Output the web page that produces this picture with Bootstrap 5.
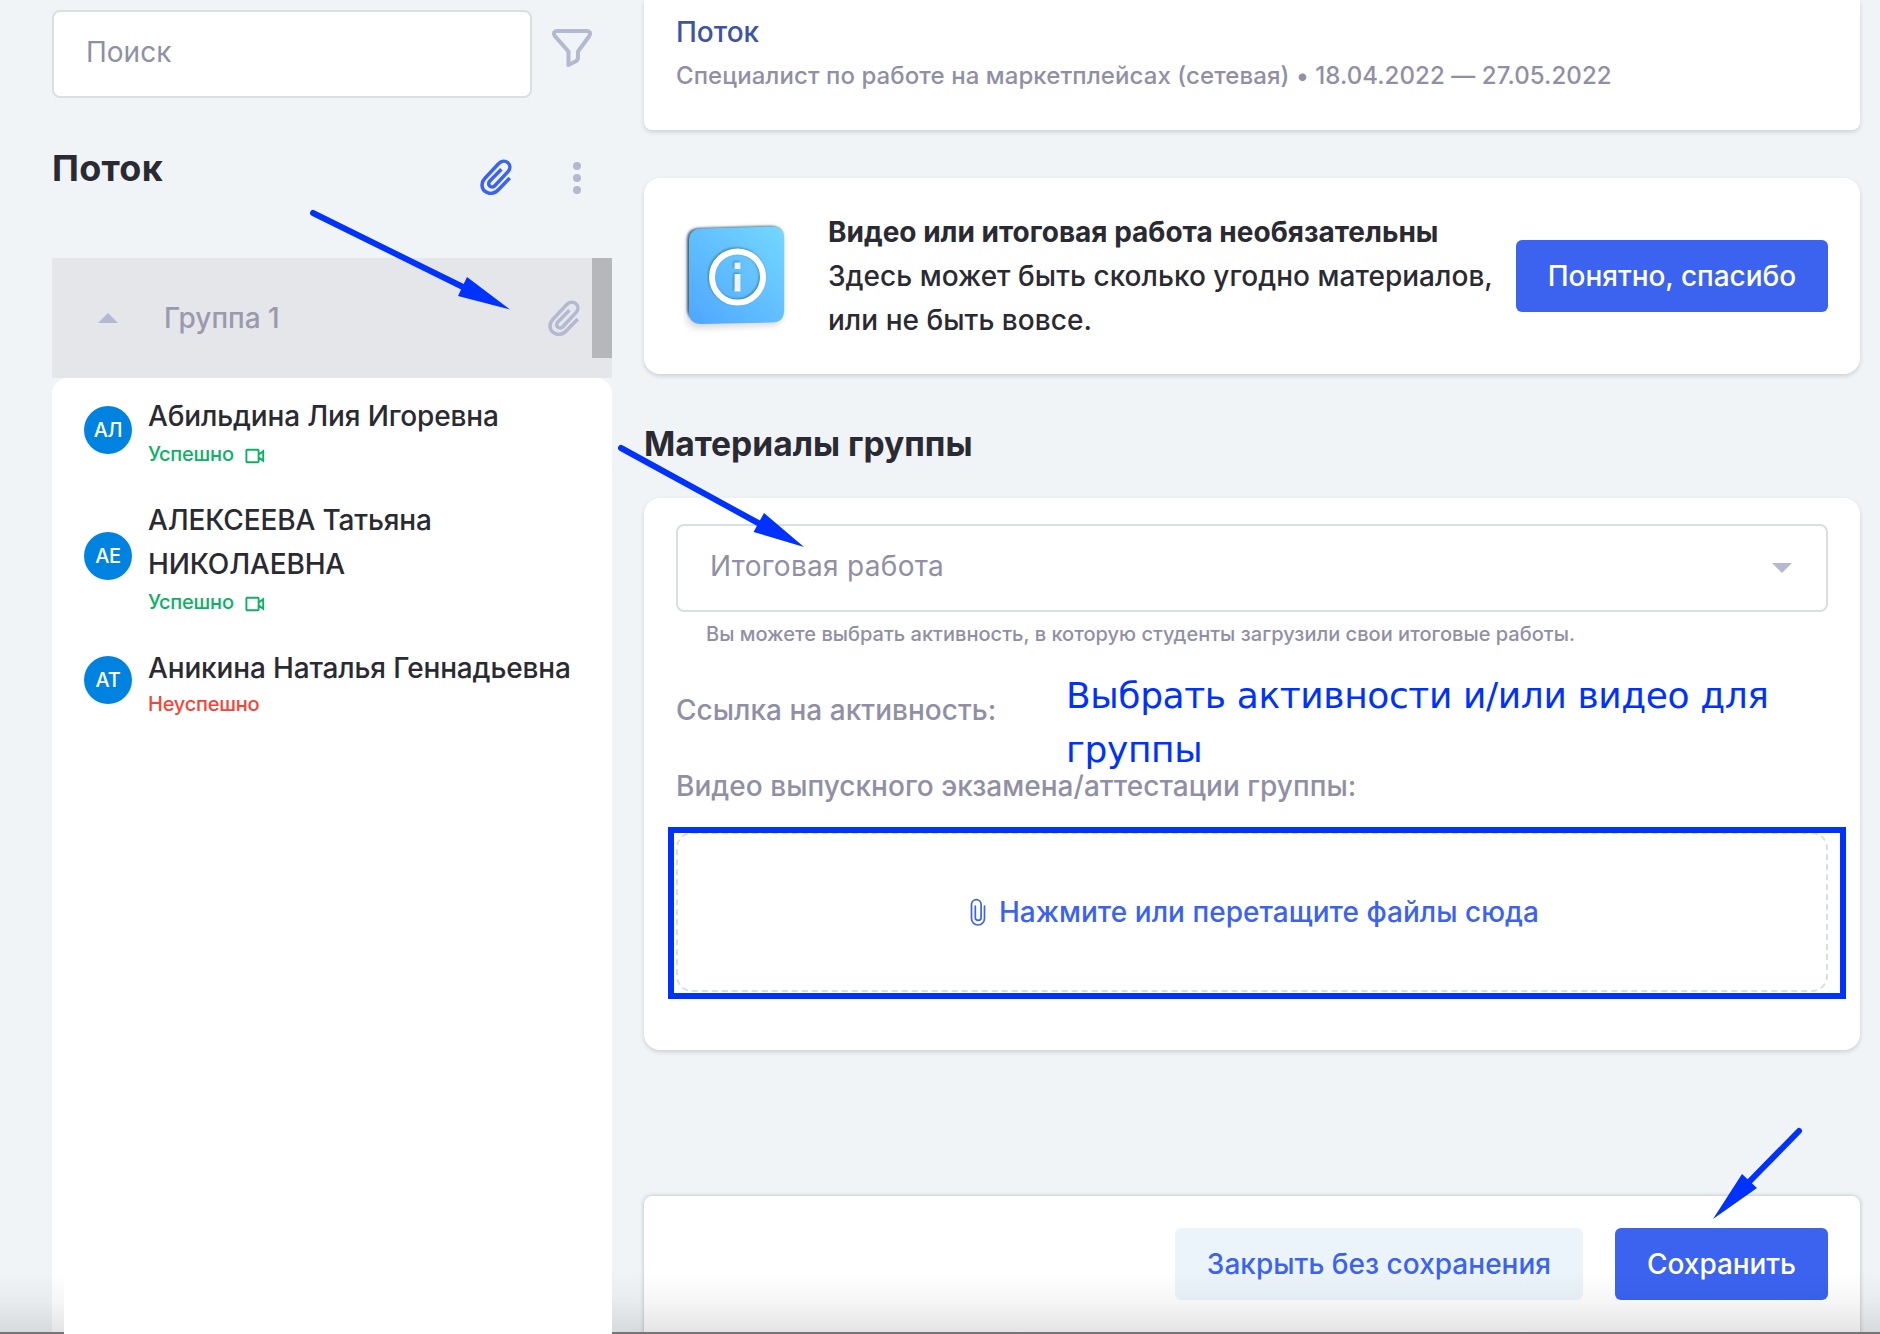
<!DOCTYPE html>
<html lang="ru">
<head>
<meta charset="utf-8">
<meta name="viewport" content="width=device-width, initial-scale=1">
<title>Материалы группы</title>
<link href="https://cdn.jsdelivr.net/npm/bootstrap@5.3.0/dist/css/bootstrap.min.css" rel="stylesheet">
<style>
  :root { --ink:#2a2a33; --muted:#908fa6; --line:#d9dee2; --accent:#3b63f0; --soft:#b4b8d0; --note:#0032ff; }
  body { font-family:Inter,sans-serif; font-size:28px; font-weight:500; line-height:44px; color:var(--ink); background:#f0f4f7; letter-spacing:.03px; }
  .app { width:1880px; height:1334px; padding-left:52px; }
  svg { display:block; flex:none; }
  .side { width:560px; padding-top:10px; }
  .main { width:1216px; margin-left:32px; }
  .field { height:88px; border:2px solid var(--line); border-radius:8px; background:#fff; color:var(--muted); padding:0 32px 4px; font-size:28px; font-weight:400; letter-spacing:.3px; }
  .search-field { width:480px; }
  .search-field::placeholder { color:var(--muted); opacity:1; letter-spacing:0; }
  .head-row { height:160px; padding:0 30px 0 0; }
  .flow-title { font-size:36px; font-weight:700; letter-spacing:.3px; line-height:44px; margin-top:48px; }
  .head-clip { margin:61px 60px 0 0; color:var(--accent); }
  .head-dots { margin-top:62px; }
  .muted { color:var(--muted); }
  .group-head { height:120px; background:#e5e6ea; padding:0 32px 0 46px; }
  .group-clip { color:var(--soft); }
  .group-name { margin-left:46px; letter-spacing:-.05px; color:#9a99ad; }
  .scroll-thumb { right:0; top:0; width:20px; height:100px; background:#b6b7bb; }
  .people { border-radius:16px 16px 0 0; background:#fff; padding:16px 20px 0 32px; }
  .person { letter-spacing:-.15px; gap:16px; margin-bottom:29px; }
  .avatar { width:48px; height:48px; margin-bottom:3px; background:#0082e0; color:#fff; font-size:20px; letter-spacing:-.3px; }
  .person:last-child .avatar { margin-bottom:6px; }
  .status { font-size:20px; line-height:30px; letter-spacing:-.22px; gap:11px; }
  .ok { color:#0cb166; padding-top:1px; }
  .fail { color:#f74436; margin-top:-1px; }
  .panel { background:#fff; border-radius:16px; box-shadow:0 2px 4px rgba(60,70,80,.2); padding:0 32px; }
  .panel-top { height:130px; border-radius:0 0 8px 8px; padding-top:10px; }
  .flow-link { color:#3d53a6; text-decoration:none; letter-spacing:0; }
  .sub { font-size:24px; letter-spacing:.08px; }
  .notice { height:196px; margin-top:48px; }
  .notice-text { margin-left:32px; width:688px; }
  .notice-text strong { letter-spacing:0; font-weight:700; }
  .action { height:72px; border:0; border-radius:6px; padding:0 32px; font-size:28px; font-weight:500; letter-spacing:-.05px; }
  .action.btn-primary { background:var(--accent); }
  .btn-quiet { background:#ecf4fb; color:var(--accent); letter-spacing:.02px; }
  .section-title { font-size:33.6px; font-weight:700; letter-spacing:0; line-height:44px; margin:48px 0 32px; }
  .materials { height:552px; padding-top:26px; }
  .select-caret { margin:4px 2px 0 0; }
  .hint { font-size:20px; letter-spacing:.02px; line-height:30px; padding:7px 0 0 30px; }
  .activity-label { margin-top:39px; }
  .video-label { margin:32px 0 24px; }
  .drop { height:160px; border:2px dashed var(--line); border-radius:16px; color:var(--accent); padding-left:5px; gap:13px; }
  .footer-panel { height:138px; margin-top:146px; border-radius:8px 8px 0 0; box-shadow:0 0 4px rgba(60,70,80,.35); padding-top:32px; gap:32px; }
  .fade-out { height:62px; bottom:2px; background:linear-gradient(rgba(0,0,0,0),rgba(0,0,0,.035) 50%,rgba(0,0,0,.105)); }
  .edge-line { height:2px; bottom:0; background:#777376; }
  .fade-left { left:0; width:64px; }
  .fade-right { left:612px; right:0; }
  .frame { left:668px; top:827px; width:1178px; height:172px; border:6px solid var(--note); }
  .note { left:1066px; top:669px; width:740px; font-family:"DejaVu Sans",sans-serif; font-weight:400; font-size:36px; line-height:54px; letter-spacing:-.39px; color:var(--note); }
</style>
<script src="https://cdn.jsdelivr.net/npm/bootstrap@5.3.0/dist/js/bootstrap.bundle.min.js"></script>
</head>
<body>
<svg width="0" height="0" class="position-absolute" aria-hidden="true">
  <symbol id="clip" viewBox="0 0 32 36">
    <path d="M29.800 19 18.900 30.200C15.300 34.800 9 35.800 4.800 32.200 1 28.600 1.200 23.200 4.700 19.500L19 4.300c2.600-2.500 6.100-2.900 8.700-.8 2.700 2.400 2.800 6.300.5 8.900L14.800 26.700c-1.400 1.500-3.600 1.700-5.100.3-1.400-1.400-1.300-3.500.1-5L21.400 10.200" fill="none" stroke="currentColor" stroke-width="3.500" stroke-linecap="butt" stroke-linejoin="round"/>
  </symbol>
  <symbol id="video" viewBox="0 0 20 16">
    <path d="M2.200 1.800h10.600a.8.800 0 0 1 .8.800v10.800a.8.800 0 0 1-.8.800H2.200a.8.800 0 0 1-.8-.8V2.600a.8.800 0 0 1 .8-.8z M13.800 6.500 18.200 3.200v9.600L13.800 9.500" fill="none" stroke="currentColor" stroke-width="1.900"/>
  </symbol>
</svg>

<div class="app d-flex position-relative overflow-hidden">
  <aside class="side d-flex flex-column">
    <div class="d-flex">
      <input class="field search-field" type="text" placeholder="Поиск">
      <svg class="ms-3 mt-3" width="48" height="46" viewBox="0 0 48 46" fill="none" stroke="#b4b8d0" stroke-width="4" stroke-linejoin="round"><path d="M9 5h30c3 0 4 2.500 2.500 4.700L30 25.500v6c0 2-1 3.200-2.500 4L20.500 39V25.500L6.500 9.700C5 7.500 6 5 9 5z"/></svg>
    </div>
    <div class="head-row d-flex justify-content-between">
      <h2 class="flow-title mb-0">Поток</h2>
      <div class="d-flex">
        <svg class="head-clip" width="32" height="36"><use href="#clip"/></svg>
        <svg class="head-dots" width="10" height="36" fill="#b4b8d0"><circle cx="5" cy="6" r="4"/><circle cx="5" cy="18" r="4"/><circle cx="5" cy="30" r="4"/></svg>
      </div>
    </div>
    <div class="group-head d-flex align-items-center position-relative">
      <svg width="20" height="10" fill="#b4b8d0"><path d="M0 10 10 0l10 10z"/></svg>
      <span class="group-name">Группа 1</span>
      <svg class="group-clip ms-auto" width="32" height="36"><use href="#clip"/></svg>
      <div class="scroll-thumb position-absolute"></div>
    </div>
    <div class="people flex-grow-1">
      <div class="person d-flex align-items-center">
        <span class="avatar rounded-circle d-flex align-items-center justify-content-center flex-shrink-0">АЛ</span>
        <div><div>Абильдина Лия Игоревна</div><div class="status ok d-flex align-items-center">Успешно <svg width="20" height="16" class="mt-1"><use href="#video"/></svg></div></div>
      </div>
      <div class="person d-flex align-items-center">
        <span class="avatar rounded-circle d-flex align-items-center justify-content-center flex-shrink-0">АЕ</span>
        <div><div>АЛЕКСЕЕВА Татьяна<br>НИКОЛАЕВНА</div><div class="status ok d-flex align-items-center">Успешно <svg width="20" height="16" class="mt-1"><use href="#video"/></svg></div></div>
      </div>
      <div class="person d-flex align-items-center">
        <span class="avatar rounded-circle d-flex align-items-center justify-content-center flex-shrink-0">АТ</span>
        <div><div class="text-nowrap">Аникина Наталья Геннадьевна</div><div class="status fail">Неуспешно</div></div>
      </div>
    </div>
  </aside>

  <main class="main">
    <section class="panel panel-top">
      <a class="flow-link d-block" href="#">Поток</a>
      <div class="sub muted">Специалист по работе на маркетплейсах (сетевая) • 18.04.2022 — 27.05.2022</div>
    </section>

    <section class="panel notice d-flex align-items-center">
      <svg width="120" height="120" viewBox="0 0 120 120">
        <defs>
          <linearGradient id="tile" x1="0" y1="1" x2="1" y2="0"><stop offset="0" stop-color="#4fa6ff"/><stop offset="1" stop-color="#74d8ff"/></linearGradient>
          <filter id="blur2" x="-20%" y="-20%" width="140%" height="140%"><feGaussianBlur stdDeviation="3.500"/></filter>
          <filter id="blur1" x="-20%" y="-20%" width="140%" height="140%"><feGaussianBlur stdDeviation="1"/></filter>
        </defs>
        <path d="M24 14 96 12q11 0 11 11v74q0 11-11 12l-73 3q-12 0-12-12V27q0-12 13-13z" fill="#000" opacity=".16" filter="url(#blur2)"/>
        <path d="M22 12 95 10q11 0 12 10v72q0 10-10 11l-72 2q-14 0-14-13V24q0-11 11-12z" fill="#1d4257" filter="url(#blur1)" opacity=".8"/>
        <path d="M25 12.500 96 10.500q12 0 12 12v72q0 12-12 12l-71 1.500q-12 0-12-12V25q0-12 12-12.500z" fill="url(#tile)"/>
        <g fill="none" stroke="#24597f" stroke-width="6" opacity=".6" filter="url(#blur1)"><circle cx="60.500" cy="60" r="25.500"/><path d="M60.500 57v17M60.500 45.500v6"/></g>
        <circle cx="61.500" cy="61" r="25.500" fill="none" stroke="#fff" stroke-width="6"/>
        <path d="M61.500 58v17.500M61.500 46.500v6.500" stroke="#eef4f8" stroke-width="6"/>
      </svg>
      <div class="notice-text"><strong>Видео или итоговая работа необязательны</strong><br>Здесь может быть сколько угодно материалов,<br>или не быть вовсе.</div>
      <button class="btn btn-primary action text-nowrap flex-shrink-0">Понятно, спасибо</button>
    </section>

    <h2 class="section-title">Материалы группы</h2>

    <section class="panel materials">
      <div class="field d-flex align-items-center justify-content-between">
        <span>Итоговая работа</span>
        <svg class="select-caret" width="20" height="10" fill="#b4b8d0"><path d="M0 0h20L10 10z"/></svg>
      </div>
      <div class="hint muted">Вы можете выбрать активность, в которую студенты загрузили свои итоговые работы.</div>
      <div class="activity-label muted">Ссылка на активность:</div>
      <div class="video-label muted">Видео выпускного экзамена/аттестации группы:</div>
      <div class="drop d-flex align-items-center justify-content-center">
        <svg width="16" height="28" viewBox="0 0 16 28" fill="none" stroke="currentColor" stroke-width="1.700" stroke-linecap="round"><path d="M14.500 8v12.500a6.500 6.500 0 0 1-13 0V6.500a4.800 4.800 0 0 1 9.600 0v13a2.900 2.900 0 0 1-5.800 0V8"/></svg>
        <span>Нажмите или перетащите файлы сюда</span>
      </div>
    </section>

    <section class="panel footer-panel d-flex justify-content-end align-items-start">
      <button class="btn btn-quiet action">Закрыть без сохранения</button>
      <button class="btn btn-primary action">Сохранить</button>
    </section>
  </main>

  <div class="fade-out fade-left position-absolute"></div>
  <div class="fade-out fade-right position-absolute"></div>
  <div class="edge-line fade-left position-absolute"></div>
  <div class="edge-line fade-right position-absolute"></div>

  <div class="frame position-absolute"></div>
  <div class="note position-absolute">Выбрать активности и/или видео для группы</div>
  <svg class="position-absolute top-0 start-0" width="1880" height="1334" fill="#0032ff" stroke="#0032ff" stroke-width="6" stroke-linecap="round">
    <path d="M313 213 463 287M621 448 760 524M1799 1131 1749 1182"/>
    <path stroke="none" d="M467 277 510 309.500 458 296zM764 513 804 547 753.500 532zM1742 1174l15 14-44 31z"/>
  </svg>
</div>
</body>
</html>
